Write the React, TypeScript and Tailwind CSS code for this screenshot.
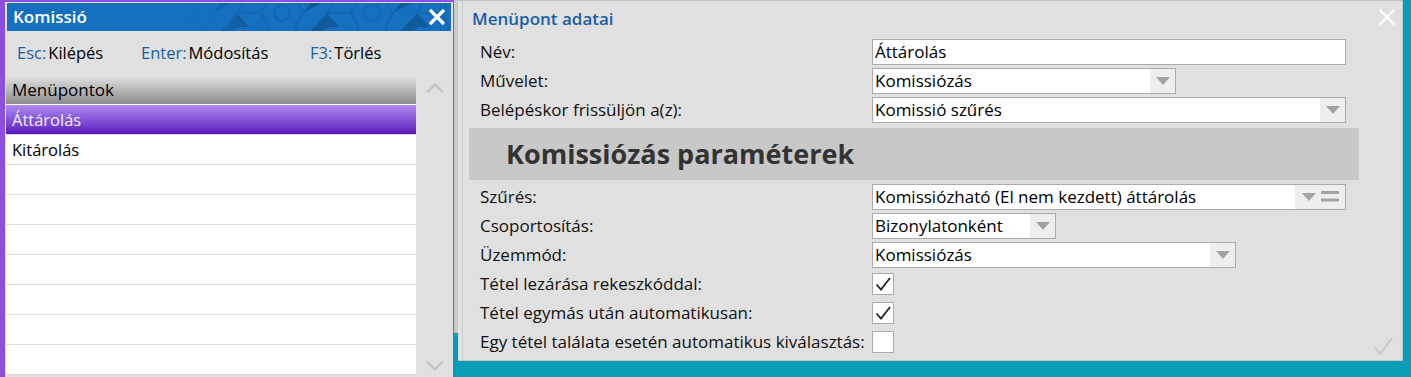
import React from 'react';

// kis lefelé mutató háromszög a legördülőkhöz
const DownArrow = () => (
  <svg width="14" height="8" viewBox="0 0 14 8">
    <path d="M0 0h14L7 8z" fill="#a3a3a3" />
  </svg>
);

const Bars = () => (
  <svg width="18" height="11" viewBox="0 0 18 11">
    <rect x="0" y="0" width="18" height="3" fill="#a3a3a3" />
    <rect x="0" y="7.5" width="18" height="3" fill="#a3a3a3" />
  </svg>
);

const Check = () => (
  <svg width="18" height="18" viewBox="0 0 18 18">
    <path d="M2.5 9.5l4.5 5L16 3" fill="none" stroke="#222" strokeWidth="1.8" />
  </svg>
);

interface FieldProps {
  value: string;
  className: string;
  dropdown?: boolean;
  bars?: boolean;
}

const Field: React.FC<FieldProps> = ({ value, className, dropdown, bars }) => (
  <div className={`flex h-[26px] items-stretch border border-[#ababab] bg-white ${className}`}>
    <div className="flex flex-1 items-center overflow-hidden whitespace-nowrap pl-[2px] text-[17px] text-black">{value}</div>
    {dropdown && (
      <div className={`flex items-center justify-center gap-[5px] bg-[#eeeeee] ${bars ? 'w-[50px]' : 'w-[25px]'}`}>
        <DownArrow />
        {bars && <Bars />}
      </div>
    )}
  </div>
);

const Row: React.FC<{ label: string; children: React.ReactNode }> = ({ label, children }) => (
  <div className="flex h-[29px] items-center">
    <div className="w-[392px] shrink-0 whitespace-nowrap text-[17px] text-[#111]">{label}</div>
    {children}
  </div>
);

const CheckBox: React.FC<{ checked?: boolean }> = ({ checked }) => (
  <div className="flex h-[22px] w-[22px] items-center justify-center border border-[#ababab] bg-white">
    {checked && <Check />}
  </div>
);

// halvány hatszög minta a fejlécen
const HexPattern = () => (
  <svg className="absolute right-0 top-0" width="270" height="28" viewBox="0 0 270 28">
    <defs>
      <linearGradient id="fade" x1="0" x2="1" y1="0" y2="0">
        <stop offset="0" stopColor="#fff" stopOpacity="0" />
        <stop offset="0.3" stopColor="#fff" stopOpacity="1" />
      </linearGradient>
      <mask id="m">
        <rect width="270" height="28" fill="url(#fade)" />
      </mask>
      <pattern id="hex" width="90" height="28" patternUnits="userSpaceOnUse" x="-10" y="-4">
        <path d="M0 14l9-16h24l9 16-9 16H9z" fill="none" stroke="#1766ad" strokeWidth="2" />
        <circle cx="21" cy="14" r="8" fill="none" stroke="#1266b0" strokeWidth="2" />
        <path d="M42 14l12-16h18z" fill="#105a9a" />
        <path d="M52 30l14-16 14 16z" fill="#105a9a" />
        <path d="M66 14l9-16h15v16z" fill="none" stroke="#1766ad" strokeWidth="2" />
      </pattern>
    </defs>
    <rect width="270" height="28" fill="url(#hex)" mask="url(#m)" />
  </svg>
);

const LeftPanel = () => (
  <div className="flex h-[377px] w-[454px] shrink-0 flex-col border-l-[5px] border-r border-t-2 border-[#8b4fe0] bg-[#e0e0e0] pl-px pt-px">
    <div className="relative ml-px mr-[2px] flex h-[28px] items-center justify-between overflow-hidden bg-[#1570c0] pl-[6px] pr-[5px]">
      <HexPattern />
      <span className="relative text-[17px] font-semibold text-white">Komissió</span>
      <svg className="relative" width="18" height="18" viewBox="0 0 18 18">
        <path d="M2 2l14 14M16 2L2 16" stroke="#fff" strokeWidth="3.2" />
      </svg>
    </div>

    <div className="flex h-[45px] items-center pl-[11px] text-[16.5px]">
      <div className="w-[124px]">
        <span className="text-[#1a5ea8]">Esc:</span>
        <span className="ml-[2px] text-black">Kilépés</span>
      </div>
      <div className="w-[169px]">
        <span className="text-[#1a5ea8]">Enter:</span>
        <span className="ml-[2px] text-black">Módosítás</span>
      </div>
      <div>
        <span className="text-[#1a5ea8]">F3:</span>
        <span className="ml-[2px] text-black">Törlés</span>
      </div>
    </div>

    <div className="flex flex-1">
      <div className="w-[410px] shrink-0">
        <div className="flex h-[28px] items-center bg-gradient-to-b from-[#e2e2e2] to-[#8c8c8c] pl-[6px] text-[17px] text-black">
          Menüpontok
        </div>
        <div className="h-px bg-white" />
        {['Áttárolás', 'Kitárolás', '', '', '', '', '', '', ''].map((item, i) =>
          i === 0 ? (
            <div
              key={i}
              className="flex h-[30px] items-center border-b border-[#dcdcdc] bg-gradient-to-b from-[#b288f0] to-[#5c10bc] pl-[6px] pt-[2px] text-[16.5px] text-[#f4eeff]"
            >
              {item}
            </div>
          ) : (
            <div key={i} className="flex h-[30px] items-center border-b border-[#dcdcdc] bg-white pl-[6px] pt-[2px] text-[16.5px] text-black">
              {item}
            </div>
          )
        )}
      </div>
      <div className="flex flex-1 flex-col items-center justify-between pb-[6px] pt-[7px]">
        <svg width="18" height="11" viewBox="0 0 18 11">
          <path d="M1 9.5l8-8 8 8" fill="none" stroke="#c6c6c6" strokeWidth="2.6" />
        </svg>
        <svg width="18" height="11" viewBox="0 0 18 11">
          <path d="M1 1.5l8 8 8-8" fill="none" stroke="#c6c6c6" strokeWidth="2.6" />
        </svg>
      </div>
    </div>
  </div>
);

const RightPanel = () => (
  <div className="relative flex h-[361px] w-[945px] shrink-0 border border-l-0 border-[#c4c4c4] bg-[#e0e0e0] pl-[4px]">
    <div className="flex flex-1 flex-col border-l border-[#cdcdcd]">
      <div className="flex h-[36px] items-start justify-between pl-[9px] pr-[6px]">
        <span className="mt-[5px] text-[17px] font-semibold text-[#1a5ea8]">Menüpont adatai</span>
        <svg className="mt-[7px]" width="18" height="18" viewBox="0 0 18 18">
          <path d="M1.5 1.5l15 15M16.5 1.5l-15 15" stroke="#fff" strokeWidth="2.4" />
        </svg>
      </div>

      <div className="pl-[17px]">
        <Row label="Név:">
          <Field value="Áttárolás" className="w-[474px]" />
        </Row>
        <Row label="Művelet:">
          <Field value="Komissiózás" className="w-[304px]" dropdown />
        </Row>
        <Row label="Belépéskor frissüljön a(z):">
          <Field value="Komissió szűrés" className="w-[474px]" dropdown />
        </Row>
      </div>

      <div className="ml-[6px] mt-[4px] flex h-[52px] w-[890px] items-center bg-[#c8c8c8] pl-[37px]">
        <span className="text-[27px] font-bold text-[#333]">Komissiózás paraméterek</span>
      </div>

      <div className="mt-[2px] pl-[17px]">
        <Row label="Szűrés:">
          <Field value="Komissiózható (El nem kezdett) áttárolás" className="w-[474px]" dropdown bars />
        </Row>
        <Row label="Csoportosítás:">
          <Field value="Bizonylatonként" className="w-[184px]" dropdown />
        </Row>
        <Row label="Üzemmód:">
          <Field value="Komissiózás" className="w-[364px]" dropdown />
        </Row>
        <Row label="Tétel lezárása rekeszkóddal:">
          <CheckBox checked />
        </Row>
        <Row label="Tétel egymás után automatikusan:">
          <CheckBox checked />
        </Row>
        <Row label="Egy tétel találata esetén automatikus kiválasztás:">
          <CheckBox />
        </Row>
      </div>
    </div>

    <svg className="absolute bottom-[5px] right-[9px]" width="19" height="18" viewBox="0 0 19 18">
      <path d="M1 11l5 6L18 1" fill="none" stroke="#c8c8c8" strokeWidth="2" />
    </svg>
  </div>
);

export default function App() {
  return (
    <div className="flex h-[377px] w-[1411px] overflow-hidden bg-[#069db7] font-['Open_Sans',sans-serif]">
      <LeftPanel />
      <div className="flex w-[4px] shrink-0 flex-col">
        <div className="h-[333px] bg-[#c9c9c9]" />
      </div>
      <RightPanel />
    </div>
  );
}
